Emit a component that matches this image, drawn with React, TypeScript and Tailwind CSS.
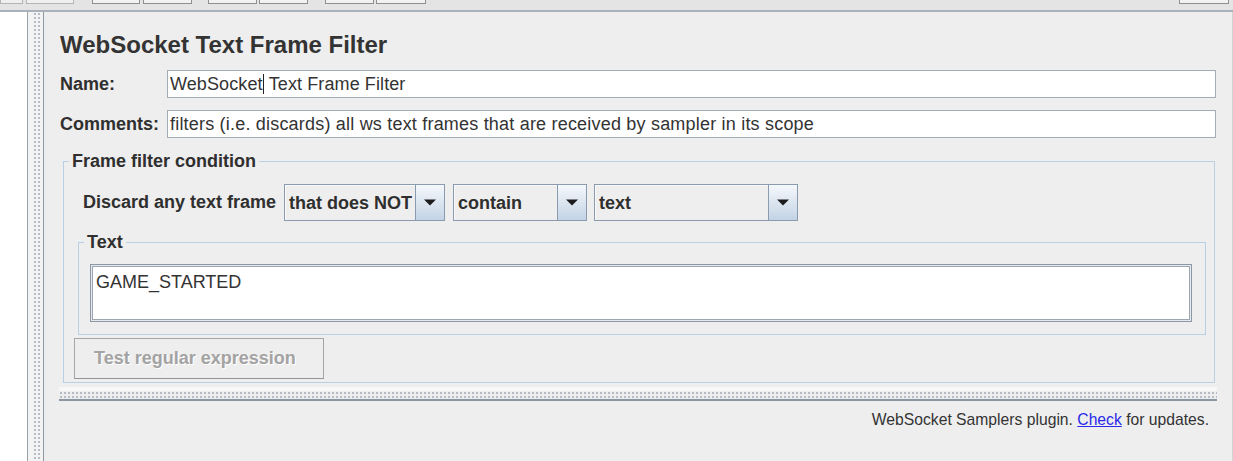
import React from 'react';

const ComboBox = ({ label, className }: { label: string; className: string }) => (
  <div className={`flex h-[37px] border border-[#8a9bb0] bg-[#eeeeee] ${className}`}>
    <div className="flex flex-1 items-center pl-[4px] text-[18px] font-bold leading-none text-[#2f2f2f] shadow-[inset_1px_1px_0_#fafafa]">
      {label}
    </div>
    <div className="flex w-[29px] items-center justify-center border-l border-[#8a9bb0] bg-gradient-to-b from-[#f5f8fb] to-[#c3d3e5]">
      <svg width="12" height="7" viewBox="0 0 12 7">
        <path d="M0 0.5 L12 0.5 L6 6.5 Z" fill="#1c1c1c" />
      </svg>
    </div>
  </div>
);

const App = () => {
  return (
    <div className="flex h-[461px] w-[1233px] flex-col overflow-hidden bg-[#eeeeee] font-['Liberation_Sans',Arial,sans-serif] text-[#2f2f2f]">
      {/* toolbar strip, mostly scrolled off */}
      <div className="flex h-[12px] items-start border-b-2 border-[#a9b2bb] bg-[#e4e4e4]">
        <div className="h-[4px] w-[23px] border-x border-b border-[#b4b4b4] bg-[#efefef]" />
        <div className="ml-[3px] h-[4px] w-[48px] border-x border-b border-[#b4b4b4] bg-[#efefef]" />
        <div className="ml-[18px] h-[4px] w-[48px] border-x border-b border-[#8f8f8f] bg-[#f2f2f2]" />
        <div className="ml-[3px] h-[4px] w-[49px] border-x border-b border-[#8f8f8f] bg-[#f2f2f2]" />
        <div className="ml-[16px] h-[4px] w-[49px] border-x border-b border-[#8f8f8f] bg-[#f2f2f2]" />
        <div className="ml-[2px] h-[4px] w-[49px] border-x border-b border-[#8f8f8f] bg-[#f2f2f2]" />
        <div className="ml-[17px] h-[4px] w-[49px] border-x border-b border-[#8f8f8f] bg-[#f2f2f2]" />
        <div className="ml-[2px] h-[4px] w-[50px] border-x border-b border-[#8f8f8f] bg-[#f2f2f2]" />
        <div className="ml-auto mr-[4px] h-[4px] w-[50px] border-x border-b border-[#8f8f8f] bg-[#f2f2f2]" />
      </div>

      <div className="flex flex-1">
        {/* tree */}
        <div className="w-[28px] border-r border-[#9aa1a8] bg-white" />
        {/* splitter */}
        <div className="w-[16px] border-r border-[#8f99a3] bg-[#f3f3f3] pl-[5px]">
          <div className="h-full w-[8px] bg-[radial-gradient(circle,#b3bcc5_0.7px,transparent_1px)] bg-[length:4px_4px]" />
        </div>

        {/* editor */}
        <div className="flex flex-1 flex-col border-r border-[#d2d2d2] pl-[15px] pr-[15px]">
          <div className="mt-[19px] h-[28px] pl-[1px] text-[24px] font-bold leading-[28px] text-[#333333]">
            WebSocket Text Frame Filter
          </div>

          <div className="mt-[11px] flex h-[28px] items-center">
            <div className="w-[108px] pl-[1px] text-[18px] font-bold">Name:</div>
            <div className="mr-[1px] flex h-[28px] flex-1 items-center border border-[#a1adb9] bg-white pl-[2px] text-[18px] leading-[20px] tracking-[0.1px] text-[#333333]">
              <span className="border-r border-[#222222]">WebSocket</span>&nbsp;Text Frame Filter
            </div>
          </div>

          <div className="mt-[12px] flex h-[28px] items-center">
            <div className="w-[108px] pl-[1px] text-[18px] font-bold">Comments:</div>
            <div className="mr-[1px] flex h-[28px] flex-1 items-center border border-[#a1adb9] bg-white pl-[2px] text-[18px] leading-[20px] tracking-[0.2px] text-[#333333]">
              filters (i.e. discards) all ws text frames that are received by sampler in its scope
            </div>
          </div>

          <fieldset className="ml-[4px] mr-[2px] mt-[13px] border border-[#b9cfe5]">
            <legend className="ml-[5px] px-[3px] text-[18px] font-bold leading-[20px]">Frame filter condition</legend>

            <div className="mt-[13px] flex items-center pl-[19px]">
              <div className="w-[201px] text-[18px] font-bold">Discard any text frame</div>
              <ComboBox label="that does NOT" className="w-[161px]" />
              <ComboBox label="contain" className="ml-[8px] w-[134px]" />
              <ComboBox label="text" className="ml-[7px] w-[204px]" />
            </div>

            <fieldset className="ml-[14px] mr-[8px] mt-[11px] border border-[#b9cfe5]">
              <legend className="ml-[5px] px-[3px] text-[18px] font-bold leading-[20px]">Text</legend>
              <div className="mb-[12px] ml-[11px] mr-[13px] mt-[12px] h-[58px] border border-[#8c98a4] bg-[#e6eaee] p-[1px]">
                <div className="h-full border border-[#9ba6b1] bg-white pl-[3px] pt-[5px] text-[18px] leading-[20px] text-[#333333]">
                  GAME_STARTED
                </div>
              </div>
            </fieldset>

            <div className="mb-[3px] ml-[10px] mt-[3px] flex h-[41px] w-[250px] items-center border border-[#a6a6a6] border-b-[#959595] pl-[19px] text-[18px] font-bold text-[#a3a3a3] [text-shadow:1px_1px_0_#ffffff]">
              Test regular expression
            </div>
          </fieldset>

          <div className="mt-[4px] border-t-4 border-b-2 border-t-[#f7f7f7] border-b-[#8c96a0]">
            <div className="h-[8px] bg-[radial-gradient(circle,#b3bcc5_0.7px,transparent_1px)] bg-[length:4px_4px]" />
          </div>

          <div className="mt-[9px] pr-[8px] text-right text-[15.7px] leading-[20px] text-[#333333]">
            WebSocket Samplers plugin. <span className="text-[#2a2ae8] underline">Check</span> for updates.
          </div>
        </div>
      </div>
    </div>
  );
};

export default App;
